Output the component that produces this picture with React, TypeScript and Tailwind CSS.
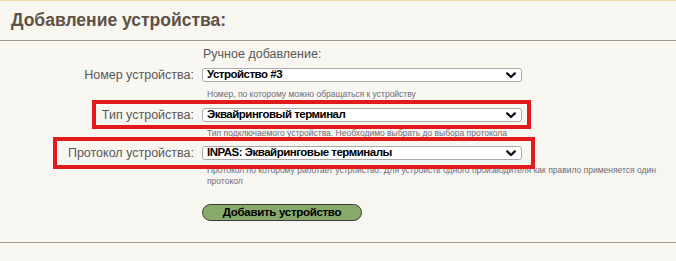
import React from 'react';

type Row = {
  label: string;
  value: string;
  hint: string;
  top: string;
  hintTop: string;
};

const rows: Row[] = [
  {
    label: 'Номер устройства:',
    value: 'Устройство #3',
    hint: 'Номер, по которому можно обращаться к устройству',
    top: 'mt-[6px]',
    hintTop: 'mt-[7px]',
  },
  {
    label: 'Тип устройства:',
    value: 'Эквайринговый терминал',
    hint: 'Тип подключаемого устройства. Необходимо выбрать до выбора протокола',
    top: 'mt-[8px]',
    hintTop: 'mt-[6px]',
  },
  {
    label: 'Протокол устройства:',
    value: 'INPAS: Эквайринговые терминалы',
    hint: 'Протокол по которому работает устройство. Для устройств одного производителя как правило применяется один протокол',
    top: 'mt-[7px]',
    hintTop: 'mt-[5px]',
  },
];

function Chevron() {
  return (
    <svg width="10" height="7" viewBox="0 0 10 7" className="shrink-0">
      <path d="M1.2 1.4 L5 5 L8.8 1.4" fill="none" stroke="#111" strokeWidth="2.3" strokeLinecap="round" strokeLinejoin="round" />
    </svg>
  );
}

function FakeSelect({ value }: { value: string }) {
  return (
    <div className="flex h-[14px] w-[320px] items-center justify-between rounded-[3px] border border-[#a9a9a9] bg-white pl-[4px] pr-[5px]">
      <span className="text-[11.5px] font-bold leading-none tracking-[-0.5px] text-black">{value}</span>
      <Chevron />
    </div>
  );
}

export default function App() {
  return (
    <div
      className="relative h-[261px] w-[676px] overflow-hidden border-t border-[#efdcaa] bg-[#f8f6f0]"
      style={{ fontFamily: '"Liberation Sans", Arial, sans-serif' }}
    >
      <div className="flex h-[40px] items-center border-b border-[#a89a8b] pl-[11px] pb-[1px]">
        <h1 className="text-[17.5px] font-bold text-[#5d5146]">Добавление устройства:</h1>
      </div>

      <div className="h-[202px] border-b border-[#a89a8b]">
        <div className="pl-[203px] pt-[6px] text-[12.5px] leading-[15px] text-[#585858]">Ручное добавление:</div>

        {rows.map((r) => (
          <div key={r.label} className={r.top}>
            <div className="grid grid-cols-[202px_1fr] items-center">
              <div className="pr-[8px] text-right text-[12.5px] leading-[14px] text-[#585858]">{r.label}</div>
              <FakeSelect value={r.value} />
            </div>
            <div className={`${r.hintTop} w-[672px] pl-[207px] text-[8.5px] leading-[11px] text-[#6c6c78]`}>
              {r.hint}
            </div>
          </div>
        ))}

        <div className="mt-[17px] pl-[202px]">
          <button className="flex h-[17px] w-[160px] items-center justify-center rounded-full border border-[#3a3a3a] bg-[#87a96c] text-[11.5px] font-bold leading-none tracking-[-0.3px] text-black">
            Добавить устройство
          </button>
        </div>
      </div>

      {/* annotation boxes drawn over the form */}
      <div className="absolute left-[92px] top-[99px] h-[29px] w-[439px] border-[4px] border-[#e11b1b]" />
      <div className="absolute left-[53px] top-[136px] h-[32px] w-[482px] border-[4px] border-[#e11b1b]" />
    </div>
  );
}
